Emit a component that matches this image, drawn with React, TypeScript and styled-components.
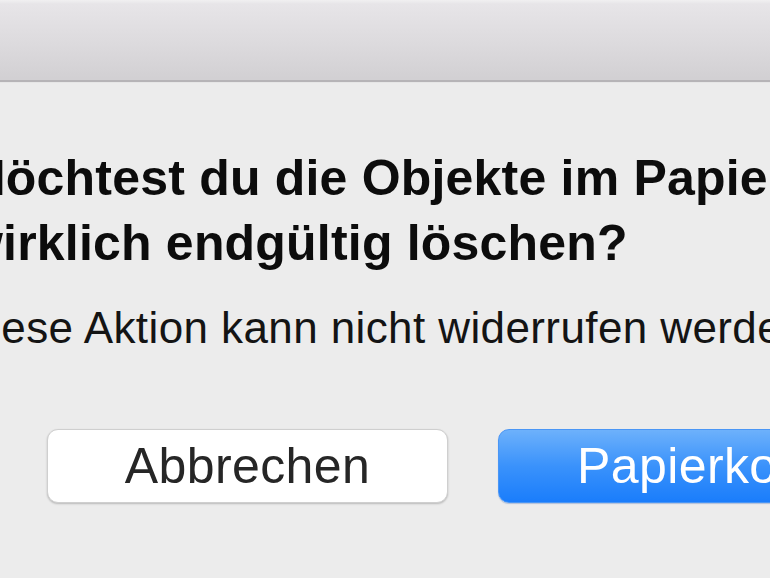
import React from "react";
import styled, { createGlobalStyle } from "styled-components";

const GlobalStyle = createGlobalStyle`
  html, body {
    margin: 0;
    padding: 0;
    overflow: hidden;
    background: #ececec;
  }
  body {
    width: 770px;
    height: 578px;
    font-family: "Liberation Sans", Arial, sans-serif;
    -webkit-font-smoothing: antialiased;
  }
`;

const Window = styled.div`
  width: 770px;
  height: 578px;
  display: flex;
  flex-direction: column;
  background: #ececec;
  overflow: hidden;
`;

// window title bar, nothing in it (the window is scaled far past its buttons)
const TitleBar = styled.div`
  height: 80px;
  flex-shrink: 0;
  background: linear-gradient(#f1f0f1 0px, #e7e5e8 4px, #dcdadd 45px, #d2d0d3 78px);
  border-bottom: 2px solid #b6b4b7;
  box-shadow: 0 1px 0 #e6e6e6;
`;

const Body = styled.div`
  display: flex;
  flex-direction: column;
  padding-top: 64px;
`;

const Texts = styled.div`
  margin-left: -36px;
  display: flex;
  flex-direction: column;
  gap: 26px;
`;

const Title = styled.h1`
  margin: 0;
  width: 1000px;
  font-size: 50px;
  font-weight: 700;
  line-height: 65px;
  letter-spacing: 0.2px;
  color: #0c0c0c;
`;

const Message = styled.p`
  margin: 0 0 0 -5px;
  font-size: 44px;
  line-height: 52px;
  letter-spacing: 0.4px;
  white-space: nowrap;
  color: #141414;
`;

const ButtonRow = styled.div`
  display: flex;
  gap: 50px;
  padding-left: 47px;
  margin-top: 75px;
`;

const Button = styled.button<{ $primary?: boolean }>`
  flex-shrink: 0;
  height: 74px;
  box-sizing: border-box;
  display: flex;
  align-items: center;
  justify-content: center;
  border-radius: 11px;
  font-family: inherit;
  font-size: 50px;
  letter-spacing: 0.4px;
  white-space: nowrap;
  cursor: default;
  width: ${(p) => (p.$primary ? "auto" : "401px")};
  padding: ${(p) => (p.$primary ? "0 80px 0 78px" : "0")};
  color: ${(p) => (p.$primary ? "#ffffff" : "#262626")};
  background: ${(p) =>
    p.$primary ? "linear-gradient(#6db1fb, #3a92fb 50%, #1a7dfb)" : "#ffffff"};
  border: 1px solid ${(p) => (p.$primary ? "#4a96f5" : "#cfcfcf")};
  box-shadow: ${(p) =>
    p.$primary ? "0 1px 1px rgba(0, 60, 160, 0.25)" : "0 1px 2px rgba(0, 0, 0, 0.22)"};
`;

export default function App() {
  return (
    <>
      <GlobalStyle />
      <Window>
        <TitleBar />
        <Body>
          <Texts>
            <Title>Möchtest du die Objekte im Papierkorb wirklich endgültig löschen?</Title>
            <Message>Diese Aktion kann nicht widerrufen werden.</Message>
          </Texts>
          <ButtonRow>
            <Button>Abbrechen</Button>
            <Button $primary>Papierkorb entleeren</Button>
          </ButtonRow>
        </Body>
      </Window>
    </>
  );
}
